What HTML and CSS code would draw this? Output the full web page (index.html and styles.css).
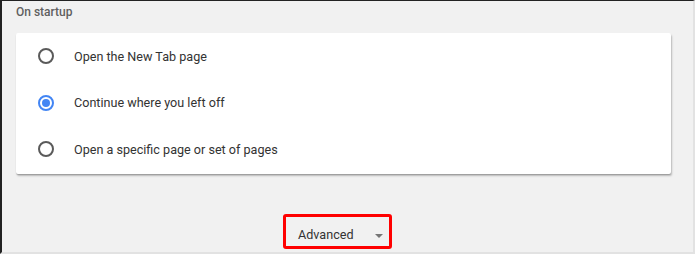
FILE: index.html
```html
<!DOCTYPE html>
<html lang="en">
<head>
  <meta charset="UTF-8">
  <title>On startup</title>
  <link rel="stylesheet" href="styles.css">
</head>
<body>

<div class="page">
  <h2 class="titre">On startup</h2>

  <div class="carte">
    <div class="ligne">
      <span class="radio"></span>
      <span>Open the New Tab page</span>
    </div>
    <div class="ligne">
      <span class="radio actif"></span>
      <span>Continue where you left off</span>
    </div>
    <div class="ligne">
      <span class="radio"></span>
      <span>Open a specific page or set of pages</span>
    </div>
  </div>

  <div class="bas">
    <div class="avance">
      <span>Advanced</span>
      <span class="fleche"></span>
    </div>
  </div>
</div>

</body>
</html>
```

FILE: styles.css
```css
html, body {
  margin: 0;
  height: 100%;
}
body {
  font-family: Roboto, "Liberation Sans", Arial, sans-serif;
  background: #f1f1f1;
  color: #333;
}
.page {
  box-sizing: border-box;
  height: 254px;
  border-top: 1px solid #222;
  border-left: 2px solid #222;
  border-right: 2px solid #e2e2e2;
  border-bottom: 2px solid #e2e2e2;
  padding: 0 22px 0 14px;
}
.titre {
  margin: 0;
  padding-top: 4px;
  height: 28px;
  font-size: 12px;
  font-weight: 500;
  color: #5f5f5f;
}
.carte {
  background: #fff;
  height: 141px;
  box-shadow: 0 1px 1px rgba(0,0,0,0.18), 1px 2px 2px rgba(0,0,0,0.22);
  border-radius: 2px;
}
.ligne {
  display: flex;
  align-items: center;
  height: 46.5px;
  padding-left: 22px;
  font-size: 12.6px;
  color: #333;
}
.radio {
  box-sizing: border-box;
  width: 16px;
  height: 16px;
  border: 2px solid #5a5a5a;
  border-radius: 50%;
  margin-right: 20px;
  position: relative;
}
.radio.actif {
  border-color: #4285f4;
}
.radio.actif::after {
  content: "";
  position: absolute;
  left: 2px;
  top: 2px;
  width: 8px;
  height: 8px;
  border-radius: 50%;
  background: #4285f4;
}
.bas {
  display: flex;
  justify-content: center;
  padding-top: 40px;
  padding-right: 12px;
}
.avance {
  box-sizing: border-box;
  width: 109px;
  height: 35px;
  border: 3px solid #f00;
  border-radius: 3px;
  display: flex;
  align-items: center;
  padding: 6px 6px 0 12px;
  font-size: 12.6px;
  color: #333;
  justify-content: space-between;
}
.fleche {
  width: 0;
  height: 0;
  border-left: 4px solid transparent;
  border-right: 4px solid transparent;
  border-top: 4px solid #757575;
  margin-top: 2px;
}
```
